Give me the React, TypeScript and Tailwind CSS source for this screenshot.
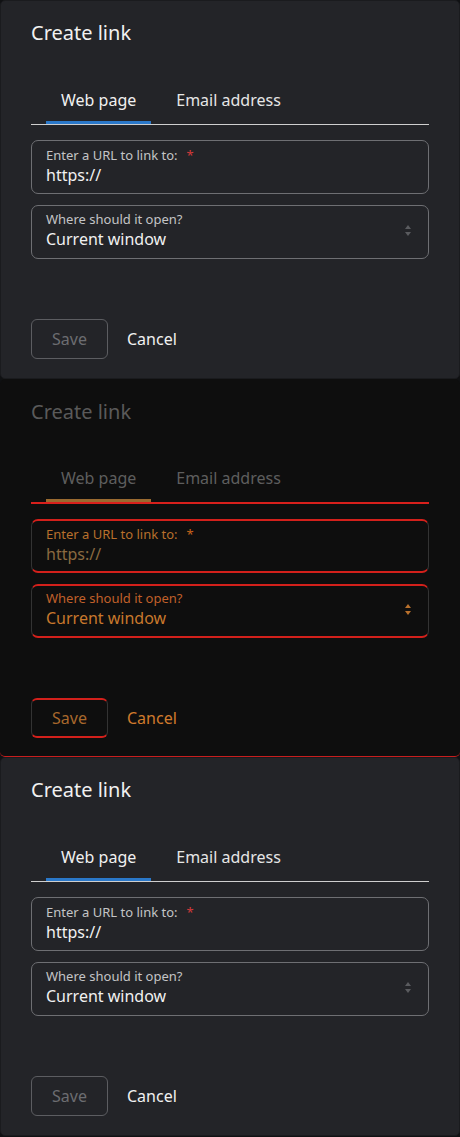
import React from "react";

type Variant = "normal" | "diff";

function Chevrons({ color }: { color: string }) {
  return (
    <svg width="8" height="13" viewBox="0 0 8 13" fill="none">
      <path d="M4 1 L7 5 L1 5 Z" fill={color} />
      <path d="M4 12 L7 8 L1 8 Z" fill={color} />
    </svg>
  );
}

function Panel({ variant }: { variant: Variant }) {
  const d = variant === "diff";
  return (
    <div
      className={
        d
          ? "h-[378px] rounded-[5px] bg-[#0e0e0e] px-[31px] pt-[19px] border-b border-[#c81e1e]"
          : "h-[379px] rounded-[5px] bg-[#232428] px-[30px] pt-[18px] border border-[#1a1b1e]"
      }
    >
      <h2 className={d ? "text-[20px] leading-[28px] text-[#5a5a5a]" : "text-[20px] leading-[28px] text-[#f1f1f1]"}>
        Create link
      </h2>
      <div
        className={
          d
            ? "mt-[31px] flex gap-[10px] pl-[15px] border-b-2 border-[#d8201c]"
            : "mt-[32px] flex gap-[10px] pl-[15px] border-b border-[#cfcfcf]"
        }
      >
        <div
          className={
            d
              ? "px-[15px] pt-[9px] pb-[9px] text-[16px] leading-[24px] text-[#5e5e5e] border-b-[3px] border-[#9a6a30]"
              : "px-[15px] pt-[9px] pb-[9px] text-[16px] leading-[24px] text-[#f1f1f1] border-b-[3px] border-[#2a78c9]"
          }
        >
          Web page
        </div>
        <div
          className={
            d
              ? "px-[15px] pt-[9px] pb-[12px] text-[16px] leading-[24px] text-[#5e5e5e]"
              : "px-[15px] pt-[9px] pb-[12px] text-[16px] leading-[24px] text-[#e6e6e6]"
          }
        >
          Email address
        </div>
      </div>

      <div
        className={
          d
            ? "mt-[15px] rounded-[7px] border-x border-x-[#333] border-y-2 border-y-[#d3201b] px-[14px] pt-[4px] pb-[6px]"
            : "mt-[15px] rounded-[7px] border border-[#6e6f73] px-[14px] pt-[5px] pb-[7px]"
        }
      >
        <div className={d ? "text-[13px] leading-[18px] text-[#b8702c]" : "text-[13px] leading-[18px] text-[#c4c4c6]"}>
          Enter a URL to link to:
          <span className={d ? "ml-[9px] text-[#c8641c]" : "ml-[9px] text-[#d33a3a]"}>*</span>
        </div>
        <div className={d ? "text-[16px] leading-[22px] text-[#8a6a40]" : "text-[16px] leading-[22px] text-[#f1f1f1]"}>
          https://
        </div>
      </div>

      <div
        className={
          d
            ? "mt-[11px] flex items-center rounded-[7px] border-x border-x-[#333] border-y-2 border-y-[#d3201b] px-[14px] pt-[3px] pb-[7px]"
            : "mt-[11px] flex items-center rounded-[7px] border border-[#6e6f73] px-[14px] pt-[4px] pb-[8px]"
        }
      >
        <div className="flex-1">
          <div className={d ? "text-[13px] leading-[18px] text-[#c0602a]" : "text-[13px] leading-[18px] text-[#c4c4c6]"}>
            Where should it open?
          </div>
          <div className={d ? "text-[16px] leading-[22px] text-[#c8782c]" : "text-[16px] leading-[22px] text-[#f1f1f1]"}>
            Current window
          </div>
        </div>
        <div className="mr-[2px] mt-[1px]">
          <Chevrons color={d ? "#b8702c" : "#5a5b5f"} />
        </div>
      </div>

      <div className="mt-[60px] flex items-center gap-[19px]">
        <div
          className={
            d
              ? "h-[40px] w-[77px] flex items-center justify-center rounded-[6px] border-x border-x-[#333] border-y-2 border-y-[#d3201b] text-[16px] text-[#a8682c]"
              : "h-[40px] w-[77px] flex items-center justify-center rounded-[6px] border border-[#5c5d61] text-[16px] text-[#6c6d71]"
          }
        >
          Save
        </div>
        <div className={d ? "text-[16px] text-[#d07a2c]" : "text-[16px] text-[#f1f1f1]"}>Cancel</div>
      </div>
    </div>
  );
}

export default function App() {
  return (
    <div
      className="w-[460px] h-[1137px] bg-[#101113] flex flex-col"
      style={{ fontFamily: '"Noto Sans", "Open Sans", sans-serif' }}
    >
      <Panel variant="normal" />
      <Panel variant="diff" />
      <Panel variant="normal" />
    </div>
  );
}
